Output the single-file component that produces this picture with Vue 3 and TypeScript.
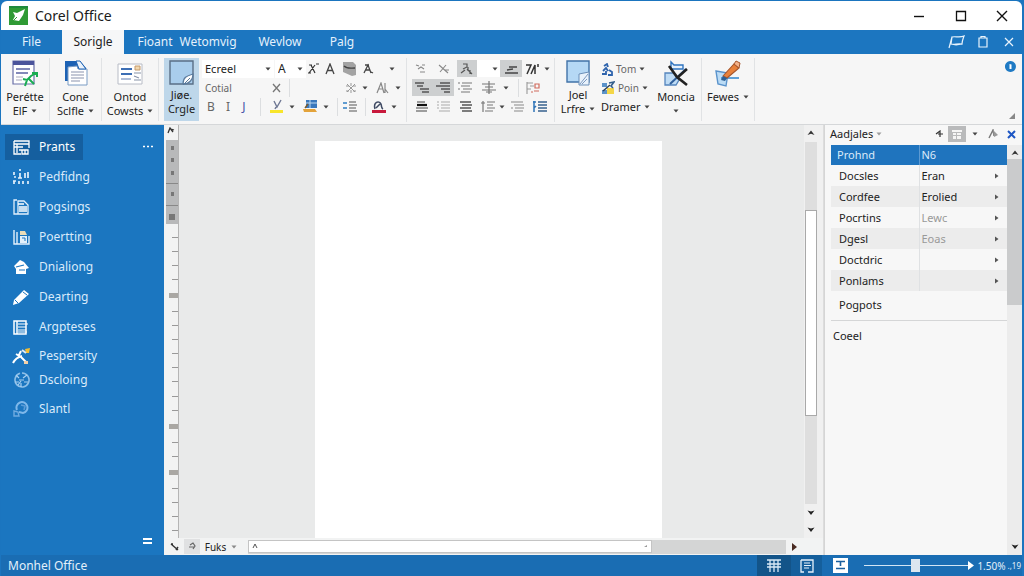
<script setup lang="ts">
import { h, ref } from 'vue'

type Shape = [d: string, fill: string, stroke?: string, width?: number]
type Icon = { w: number; h: number; s: Shape[] }

const K = '#333'
const G = '#888'

const icons: Record<string, Icon> = {
  logo: { w: 19, h: 19, s: [['M0 0H19V19H0Z', '#2f9a34'], ['M0 0H19V2H0Z', '#1f8a3c'], ['M4 6L8 7L16 3L14 9L10 15L4 14L6 10Z', '#fff'], ['M4 15L8 11', 'none', '#2f9a34', 1]] },
  min: { w: 12, h: 12, s: [['M1 6.5H11', 'none', '#111', 1.4]] },
  max: { w: 12, h: 12, s: [['M1.5 1.5H10.5V10.5H1.5Z', 'none', '#111', 1.3]] },
  close: { w: 12, h: 12, s: [['M1 1L11 11M11 1L1 11', 'none', '#111', 1.4]] },
  flag: { w: 18, h: 14, s: [['M4 2C7 1 12 3 16 1C15 4 14 6 14 9C10 8 6 10 3 9ZM4 2L1 13M3 9C6 10 10 10 14 9', 'none', '#e8f3fc', 1.2]] },
  clip: { w: 12, h: 14, s: [['M2 3H10V12H2ZM4 3V1.5H8V3', 'none', '#e8f3fc', 1.2]] },
  closeW: { w: 10, h: 10, s: [['M1 1L9 9M9 1L1 9', 'none', '#e8f3fc', 1.2]] },
  caret: { w: 6, h: 4, s: [['M0.5 0.5H5.5L3 3.5Z', '#444']] },
  info: { w: 11, h: 11, s: [['M5.5 0A5.5 5.5 0 1 1 5.4 0Z', '#1f7ac4'], ['M4.5 3L6.5 3.5V8H4.5Z', '#fff']] },
  collapse: { w: 7, h: 6, s: [['M0 6L6 0V6Z', '#888']] },

  report: { w: 26, h: 28, s: [['M1 1H22V24H1Z', '#fff', '#6a70a8', 1.2], ['M1 1H22V5H1Z', '#4b549b'], ['M4 9H18M4 13H16', 'none', '#5b63a3', 1.6], ['M4 17H11M4 20H10', 'none', '#aab', 1.2], ['M11 19L15 20L19 16L24 13M15 20L13 26M17 19L22 24M20 13H25V17', 'none', '#19ad52', 2]] },
  doc: { w: 24, h: 26, s: [['M1 1H16L22 8V21H1Z', '#1d62b4'], ['M4 7L13 6L14 9H23V25H4Z', '#fff', '#7b9cc4', 1], ['M12 1H16L22 9H15Z', '#eaf2fb', '#1d62b4', 1], ['M7 12H20M7 15H20M7 18H20M7 21H16', 'none', '#8a93ad', 1]] },
  letter: { w: 26, h: 24, s: [['M1 2H25V22H1Z', '#fff', '#b8bcc6', 1], ['M4 7H15M4 12H15', 'none', '#3d6fb5', 1.8], ['M4 17H14', 'none', '#8fa3c8', 1.4], ['M18 4H23V8H18Z', '#f1d7ad', '#c49a6d', 1], ['M17 11H24M17 14L22 16M17 18H24', 'none', '#8893a8', 1.1]] },
  sticky: { w: 25, h: 26, s: [['M1 1H24V24H1Z', '#a9cdec', '#5a6f86', 1.4], ['M14 24C14 17 18 16 24 14C24 20 20 24 14 24Z', '#fff', '#5a7a9c', 1.2], ['M14 25L21 18', 'none', '#5a7a9c', 1]] },
  note: { w: 24, h: 26, s: [['M1 1H23V22H1Z', '#b5d8f5', '#4273a8', 1.4], ['M13 25V14L23 12V25Z', '#e9f2fb', '#6b8fb8', 1], ['M14 24L22 14M16 24L21 19', 'none', '#7d9ac0', 1]] },
  tools: { w: 26, h: 28, s: [['M2 13H11L16 20L13 25H2Z', '#bfdcf5', '#5585bd', 1.3], ['M8 9V2L11 5H20V9Z', '#e6f1fb', '#2f74c0', 1.4], ['M23 9L7 24', 'none', '#2f5f9c', 2], ['M6 6L14 17L24 25', 'none', '#222', 2.6], ['M24 9L14 18', 'none', '#222', 2.4]] },
  brush: { w: 28, h: 28, s: [['M2 11L14 13L12 26L4 24Z', '#bcdcf5', '#5a93cc', 1.4], ['M7 18H25', 'none', '#3b8bd0', 1.6], ['M9 16L20 4L25 8L13 18Z', '#e8813b', '#a6552b', 1.1], ['M20 4L22 1L26 3L25 8Z', '#f4b28a', '#a6552b', 1], ['M9 16L13 18L11 21L7 20Z', '#2d5f94']] },

  xsup: { w: 12, h: 12, s: [['M1 10H4M8 10L4 2M2 2H5M2 10L8 2M9 1H12', 'none', K, 1.2]] },
  bigA: { w: 10, h: 12, s: [['M1 11L5 1L9 11M2.5 7.5H7.5', 'none', '#444', 1.3]] },
  clear: { w: 15, h: 15, s: [['M1 1L11 1L14 4V14L10 15L1 11Z', '#a3a3a3'], ['M2 5C5 8 8 7 13 7', 'none', '#444', 1.4]] },
  fancyA: { w: 11, h: 12, s: [['M1 10L5 2L8 10M3 7H7M2 2H6M8 9L10 10', 'none', '#444', 1.3]] },
  cross: { w: 9, h: 10, s: [['M1 1L8 9M8 1L1 9', 'none', '#777', 1.3]] },
  web: { w: 12, h: 12, s: [['M2 2L10 10M10 2L2 10M1 4H4M8 4H11M1 9H4M8 9H11M6 1V4M6 8V11', 'none', '#999', 1]] },
  aSlash: { w: 13, h: 12, s: [['M1 11L5 1L8 11M2 7H7M9 1V11M9 7L12 11', 'none', G, 1.2]] },
  hilite: { w: 15, h: 15, s: [['M5 2L8 8L12 1M7 8L6 10', 'none', '#6e7793', 1.4], ['M1 11H14V14H1Z', '#f8e52b']] },
  paint: { w: 17, h: 15, s: [['M4 1H15V9H4Z', '#3a78bd'], ['M4 4H15M8 1V9', 'none', '#bcd8f0', 1], ['M1 10H13L15 13H2Z', '#e3a33b'], ['M3 9L6 5', 'none', '#7b5a2b', 1.4]] },
  list: { w: 16, h: 13, s: [['M1 3H5M1 8H5', 'none', '#2f7fc4', 1.6], ['M7 2H14M7 5H15M7 8H14M7 11H15', 'none', '#555', 1.2]] },
  fontColor: { w: 14, h: 14, s: [['M3 9C1 2 7 0 9 4C10 7 9 8 11 9M4 8L8 4', 'none', '#3f4a63', 1.5], ['M0 10H14V13H0Z', '#c8193c']] },

  outA: { w: 12, h: 12, s: [['M1 2L4 3M7 2H10M3 6L6 4L9 6M5 9H10', 'none', G, 1.1]] },
  outB: { w: 12, h: 12, s: [['M1 2L10 10M8 2L2 9M7 7H11', 'none', G, 1.1]] },
  sort: { w: 14, h: 13, s: [['M3 2H7V5L3 7M1 11L5 8M7 7L12 12M8 5V9M10 8V12', 'none', '#555', 1.2]] },
  rule: { w: 15, h: 12, s: [['M5 4H13M1 10H14M3 7L9 6', 'none', '#444', 1.4]] },
  zed: { w: 15, h: 12, s: [['M1 2H6L2 11M6 11L10 2V11M13 1V4', 'none', '#333', 1.5]] },
  alignA: { w: 17, h: 13, s: [['M1 2H10M3 5H9M6 8H15M8 11H15', 'none', '#555', 1.5]] },
  alignB: { w: 17, h: 13, s: [['M5 2H15M1 5H15M6 8H15M9 11H15', 'none', '#555', 1.4]] },
  alignC: { w: 16, h: 13, s: [['M1 2H3M5 2H15M4 5H13M1 8H3M6 8H15M4 11H13', 'none', '#777', 1.2]] },
  alignD: { w: 16, h: 13, s: [['M1 3H14M4 6H12M1 9H15M5 11H11M8 0V13', 'none', '#777', 1.2]] },
  table: { w: 16, h: 14, s: [['M2 1V13M2 2H8M5 5H9M2 8H6', 'none', '#999', 1.1], ['M10 3H14V7H10ZM9 10H14M6 11H8', 'none', '#cf6a5c', 1.2]] },
  justA: { w: 14, h: 13, s: [['M2 2H10M1 8H13M1 11H12', 'none', '#444', 1.2], ['M2 5H12', 'none', '#111', 2.2]] },
  justB: { w: 15, h: 13, s: [['M1 2H3M5 2H14M1 5H3M5 5H14M1 8H3M5 8H14M3 11H14', 'none', '#aaa', 1.1]] },
  justC: { w: 14, h: 13, s: [['M1 2H12M3 5H13M1 8H12M3 11H13', 'none', '#555', 1.3]] },
  justD: { w: 15, h: 13, s: [['M2 1V12M0 3H4M6 2H14M6 5H12M6 8H14M4 11H12', 'none', '#777', 1.2]] },
  justE: { w: 15, h: 13, s: [['M1 2H13M4 5H14M1 8H3M5 8H14M4 11H13', 'none', '#888', 1.2]] },
  justF: { w: 16, h: 13, s: [['M2 1V12M1 2H4M4 6L2 8', 'none', '#2f74b8', 1.5], ['M6 2H15M6 5H15M6 8H15M6 11H15', 'none', '#37618f', 1.4]] },

  form: { w: 12, h: 13, s: [['M3 3L6 1L7 4M2 8L5 5L7 8M1 11H5V8M8 7L11 9V12H7', 'none', '#2f64ad', 1.8]] },
  pix: { w: 14, h: 14, s: [['M1 2H6V6H1Z', '#5c93c9'], ['M1 9H7V13H1Z', '#5c93c9'], ['M6 7H13V13H6Z', '#f4d648'], ['M8 2L13 1L10 5L12 7', 'none', '#355f8c', 1.6], ['M2 10L9 4', 'none', '#2c3e55', 1.4]] },

  grid: { w: 17, h: 15, s: [['M1 1H16V8M1 1V14H8M1 4H16M1 7H10M4 4V13M6 10H15V14H9V10M12 10V14', 'none', '#fff', 1.3]] },
  people: { w: 17, h: 16, s: [['M1 3V6M7 0V2M7 4V9M5 9H9M1 8H3M12 4V9M15 3V9M1 12V15M6 12V15M10 12V15M15 12V15M0 12H3', 'none', '#e3f0fb', 1.7]] },
  pages: { w: 17, h: 17, s: [['M4 1H1V15H5M5 2H11L15 6V15H5Z', 'none', '#e3f0fb', 1.3], ['M5 5H11M6 8H14M6 10H14M6 12H14', 'none', '#fff', 1.3]] },
  chart: { w: 17, h: 17, s: [['M1 1V15H16V7M4 15V3', 'none', '#e3f0fb', 1.4], ['M7 2H12L14 6H7Z', '#eadcb8'], ['M7 7H14V14H7Z', '#e3f0fb'], ['M9 9H12V12', 'none', '#1b75bf', 1]] },
  home: { w: 17, h: 16, s: [['M1 7L7 1L11 3L16 9L13 10V15H3V10Z', '#fff'], ['M3 8L11 6M6 11H12', 'none', '#1b75bf', 1.2]] },
  pencil: { w: 18, h: 17, s: [['M1 16L2 11L12 1L17 5L7 14Z', '#fff'], ['M11 3L15 6M3 11L6 14', 'none', '#1b75bf', 1]] },
  lines: { w: 16, h: 16, s: [['M1 2H13V15H1ZM4 2V15', 'none', '#fff', 1.5], ['M5 5H15M5 8H13M5 11H13M5 13H14', 'none', '#fff', 1.2]] },
  runner: { w: 18, h: 17, s: [['M1 15C3 11 6 9 10 8M4 6L9 9L14 14M9 3L7 7', 'none', '#fff', 2], ['M13 1L18 0L17 5L14 5Z', '#f0bd35'], ['M10 2L14 5', 'none', '#dce9f5', 2], ['M12 13H16V16H12Z', '#f2cfa8']] },
  gear: { w: 17, h: 17, s: [['M9 1A7 7 0 1 1 7 1.3', 'none', '#8fc0e8', 1.6], ['M3 3L6 6M14 3L10 6M2 10H6M15 10H11M8 15V11M6 8H11M5 13L8 9', 'none', '#a9d0f0', 1.2]] },
  bubble: { w: 17, h: 17, s: [['M4 9A5.5 5.5 0 1 1 10 12L6 11', 'none', '#7fb8ea', 2], ['M1 10L5 11L6 15H1Z', 'none', '#6fabe0', 1.4], ['M8 4L12 5L11 9', 'none', '#5a9cd8', 1.6]] },
  equals: { w: 9, h: 8, s: [['M0 1H9V3H0ZM0 5H9V7H0Z', '#fff']] },
  dots: { w: 10, h: 3, s: [['M0 1.5H2M4 1.5H6M8 1.5H10', 'none', '#fff', 1.5]] },

  up: { w: 8, h: 6, s: [['M0.5 5L4 0.5L7.5 5L4 3.8Z', '#333']] },
  down: { w: 8, h: 6, s: [['M0.5 0.5L4 5L7.5 0.5L4 1.5Z', '#222']] },
  right: { w: 6, h: 8, s: [['M1 0L6 4L1 8Z', '#4a2b22']] },
  tip: { w: 4, h: 6, s: [['M0 0.5L3.5 3L0 5.5Z', '#555']] },
  corner: { w: 9, h: 8, s: [['M1 1L8 7M1 1L3 1M6 7L8 4', 'none', '#333', 1.4]] },
  cap: { w: 8, h: 7, s: [['M1 6L3 1L6 5M4 2L7 3', 'none', '#333', 1.3]] },
  ring: { w: 8, h: 9, s: [['M2 3L5 1L7 4L5 7M1 5H6', 'none', '#666', 1.2]] },
  hat: { w: 6, h: 6, s: [['M1 5L3 1L5 5', 'none', '#555', 1]] },
  dash: { w: 4, h: 4, s: [['M0 3L3 1V3Z', '#999']] },
  arrowN: { w: 8, h: 8, s: [['M1 4L5 1V7M3 4H8', 'none', '#333', 1.2]] },
  tile: { w: 10, h: 10, s: [['M0 1H10V3H0ZM1 4H4V6H1ZM5 4H9V6H5ZM1 7H4V10H1ZM5 7H9V10H5Z', '#f5f5f5']] },
  nib: { w: 10, h: 10, s: [['M1 9L5 1L6 7', 'none', '#777', 1.4], ['M5 1L10 6L6 8Z', '#999']] },
  closeB: { w: 9, h: 9, s: [['M1 1L8 8M8 1L1 8', 'none', '#1d56c4', 2]] },

  viewA: { w: 14, h: 13, s: [['M0 1H14M0 5H14M0 8H14M3 1V13M7 1V13M11 1V13', 'none', '#d9e9f6', 1.3]] },
  viewB: { w: 14, h: 14, s: [['M1 1H13V13H8M1 1V13H4', 'none', '#e6f1fa', 1.3], ['M4 4H10M4 6.5H11M4 9H9', 'none', '#e6f1fa', 1.2]] },
  viewC: { w: 15, h: 15, s: [['M0 0H15V15H0Z', '#fff'], ['M3 3.5H12M3 10.5H12M7.5 4V8', 'none', '#1a5f9e', 1.6]] },
  arrowEnd: { w: 6, h: 9, s: [['M0 0L6 4.5L0 9Z', '#fff']] },
}

const Glyph = (props: { name: string }) => {
  const i = icons[props.name]
  return h(
    'svg',
    { width: i.w, height: i.h, viewBox: `0 0 ${i.w} ${i.h}`, 'aria-hidden': 'true' },
    i.s.map(([d, fill, stroke, width]) => h('path', { d, fill, stroke: stroke ?? 'none', 'stroke-width': width ?? 1 })),
  )
}
Glyph.props = ['name']

const tabs = ['File', 'Sorigle', 'Fioant', 'Wetomvig', 'Wevlow', 'Palg']

type Tool = { w: number; icon?: string; text?: string; on?: boolean; sep?: boolean; label?: string; cls?: string }
const fontRow1: Tool[] = [
  { w: 14, icon: 'xsup', label: 'Superscript' }, { w: 20, icon: 'bigA', label: 'Grow font' }, { w: 18, icon: 'clear', label: 'Clear' },
  { w: 20, icon: 'fancyA', label: 'Effects' }, { w: 28, icon: 'caret', label: 'More effects' },
]
const fontRow2: Tool[] = [
  { w: 66, text: 'Cotial', cls: 'sub' }, { w: 16, icon: 'cross', label: 'Remove' }, { w: 10, sep: true }, { w: 48 },
  { w: 18, icon: 'web', label: 'Web' }, { w: 10, icon: 'caret', label: 'Web options' }, { w: 24, icon: 'aSlash', label: 'Case' }, { w: 8, icon: 'caret', label: 'Case options' },
]
const fontRow3: Tool[] = [
  { w: 18, text: 'B', cls: 'letter' }, { w: 16, text: 'I', cls: 'letter' }, { w: 16, text: 'J', cls: 'letter under' }, { w: 16, sep: true },
  { w: 16, icon: 'hilite', label: 'Highlight' }, { w: 16, icon: 'caret', label: 'Highlight colours' }, { w: 20, icon: 'paint', label: 'Fill' }, { w: 12, icon: 'caret', label: 'Fill colours' },
  { w: 10, sep: true }, { w: 16, icon: 'list', label: 'List' }, { w: 14, sep: true }, { w: 14, icon: 'fontColor', label: 'Font colour' }, { w: 16, icon: 'caret', label: 'Font colours' },
]
const paraRows: Tool[][] = [
  [
    { w: 18, icon: 'outA', label: 'Outline' }, { w: 27, icon: 'outB', label: 'Remove outline' }, { w: 20, icon: 'sort', on: true, label: 'Sort' },
    { w: 23, icon: 'caret', cls: 'white', label: 'Sort order' }, { w: 22, icon: 'rule', on: true, label: 'Rule' }, { w: 20, icon: 'zed', label: 'Marks' }, { w: 10, icon: 'caret', label: 'Mark options' },
  ],
  [
    { w: 20, icon: 'alignA', on: true, label: 'Indent' }, { w: 22, icon: 'alignB', on: true, label: 'Outdent' }, { w: 22, icon: 'alignC', label: 'Bullets' },
    { w: 26, icon: 'alignD', label: 'Centre' }, { w: 8, icon: 'caret', label: 'Centre options' }, { w: 16, sep: true }, { w: 14, icon: 'table', label: 'Table' },
  ],
  [
    { w: 20, icon: 'justA', label: 'Left' }, { w: 22, icon: 'justB', label: 'Middle' }, { w: 24, icon: 'justC', label: 'Right' }, { w: 20, icon: 'justD', label: 'Numbering' },
    { w: 8, icon: 'caret', label: 'Numbering options' }, { w: 22, icon: 'justE', label: 'Spacing' }, { w: 24, icon: 'justF', label: 'Line height' },
  ],
]

const nav = [
  [
    { icon: 'grid', text: 'Prants' }, { icon: 'people', text: 'Pedfidng' }, { icon: 'pages', text: 'Pogsings' }, { icon: 'chart', text: 'Poertting' },
    { icon: 'home', text: 'Dnialiong' }, { icon: 'pencil', text: 'Dearting' }, { icon: 'lines', text: 'Argpteses' },
  ],
  [{ icon: 'runner', text: 'Pespersity' }, { icon: 'gear', text: 'Dscloing' }],
  [{ icon: 'bubble', text: 'Slantl' }],
]

const rows = [
  { name: 'Docsles', value: 'Eran' }, { name: 'Cordfee', value: 'Erolied' }, { name: 'Pocrtins', value: 'Lewc', dim: true },
  { name: 'Dgesl', value: 'Eoas', dim: true }, { name: 'Doctdric', value: '' }, { name: 'Ponlams', value: '' },
]

const blocks = [4, 13, 16]
const ticks = Array.from({ length: 21 }, (_, i) => blocks.includes(i))
const zoom = ref(49)
</script>

<template>
  <div class="app">
    <header class="title">
      <Glyph name="logo" />
      <h1>Corel Office</h1>
      <div class="win">
        <button aria-label="Minimise"><Glyph name="min" /></button>
        <button aria-label="Maximise"><Glyph name="max" /></button>
        <button aria-label="Close"><Glyph name="close" /></button>
      </div>
    </header>

    <nav class="tabs">
      <button v-for="(t, i) in tabs" :key="t" :class="['tab', 'tab' + i, { active: i === 1 }]">{{ t }}</button>
      <div class="tabtools">
        <button aria-label="Flag"><Glyph name="flag" /></button>
        <button aria-label="Clipboard"><Glyph name="clip" /></button>
        <button aria-label="Close document"><Glyph name="closeW" /></button>
      </div>
    </nav>

    <section class="ribbon">
      <button class="big b1"><Glyph name="report" /><span>Perétte</span><span>ElF <Glyph name="caret" /></span></button>
      <button class="big b2"><Glyph name="doc" /><span>Cone</span><span>Sclfle <Glyph name="caret" /></span></button>
      <button class="big b3"><Glyph name="letter" /><span>Ontod</span><span>Cowsts <Glyph name="caret" /></span></button>
      <button class="big b4"><Glyph name="sticky" /><span>Jiøe.</span><span>Crgle</span></button>

      <div class="rows font">
        <div class="row">
          <label class="combo wide"><select aria-label="Font"><option>Ecreel</option></select><Glyph name="caret" /></label>
          <label class="combo size"><select aria-label="Size"><option>A</option></select><Glyph name="caret" /></label>
          <button v-for="t in fontRow1" :key="t.label" class="tool" :style="{ width: t.w + 'px' }" :aria-label="t.label"><Glyph :name="t.icon!" /></button>
        </div>
        <div v-for="(r, ri) in [fontRow2, fontRow3]" :key="ri" class="row">
          <template v-for="(t, i) in r" :key="i">
            <button v-if="t.icon || t.text" :class="['tool', t.cls]" :style="{ width: t.w + 'px' }" :aria-label="t.label">
              <Glyph v-if="t.icon" :name="t.icon" /><template v-else>{{ t.text }}</template>
            </button>
            <span v-else :class="['gap', { sep: t.sep }]" :style="{ width: t.w + 'px' }"></span>
          </template>
        </div>
      </div>

      <div class="rows para">
        <div v-for="(r, ri) in paraRows" :key="ri" class="row">
          <template v-for="(t, i) in r" :key="i">
            <button v-if="t.icon" :class="['tool', t.cls, { on: t.on }]" :style="{ width: t.w + 'px' }" :aria-label="t.label"><Glyph :name="t.icon" /></button>
            <span v-else :class="['gap', { sep: t.sep }]" :style="{ width: t.w + 'px' }"></span>
          </template>
        </div>
      </div>

      <button class="big b5"><Glyph name="note" /><span>Joel</span><span>Lrfre <Glyph name="caret" /></span></button>
      <div class="rows draw">
        <button class="row link"><Glyph name="form" />Tom <Glyph name="caret" /></button>
        <button class="row link"><Glyph name="pix" />Poin <Glyph name="caret" /></button>
        <button class="row link dark">Dramer <Glyph name="caret" /></button>
      </div>
      <button class="big b6"><Glyph name="tools" /><span>Moncia</span><span><Glyph name="caret" /></span></button>
      <button class="big b7"><Glyph name="brush" /><span>Fewes <Glyph name="caret" /></span></button>
      <div class="ends">
        <button aria-label="Information"><Glyph name="info" /></button>
        <button aria-label="Collapse ribbon"><Glyph name="collapse" /></button>
      </div>
    </section>

    <div class="body">
      <aside class="side">
        <div class="lists">
          <ul v-for="(g, gi) in nav" :key="gi" :class="{ tight: gi === 1 }">
            <li v-for="(n, i) in g" :key="n.text">
              <button :class="{ current: gi === 0 && i === 0 }"><span class="ico"><Glyph :name="n.icon" /></span>{{ n.text }}</button>
            </li>
          </ul>
        </div>
        <div class="sidetools">
          <button aria-label="More"><Glyph name="dots" /></button>
          <button aria-label="Options"><Glyph name="equals" /></button>
        </div>
      </aside>

      <main class="work">
        <div class="ruler">
          <Glyph name="cap" />
          <div class="head"><i></i><i></i><i></i><i class="line"></i><i></i><i class="line"></i><i class="stop"></i></div>
          <div class="ticks"><i v-for="(b, i) in ticks" :key="i" :class="{ block: b }"></i></div>
        </div>
        <div class="canvas"><article class="page"></article></div>
        <div class="vbar">
          <Glyph name="up" />
          <div class="track"><div class="thumb"></div></div>
          <Glyph name="down" /><Glyph name="down" />
        </div>
        <div class="foot">
          <button class="f1" aria-label="Corner"><Glyph name="corner" /></button>
          <button class="f2" aria-label="Navigate"><Glyph name="ring" /></button>
          <button class="f3">Fuks <Glyph name="caret" /></button>
          <div class="htrack"><div class="hthumb"><Glyph name="hat" /><Glyph name="dash" /></div></div>
          <button class="f4" aria-label="Scroll right"><Glyph name="right" /></button>
        </div>
      </main>

      <aside class="panel">
        <header>
          <button class="ptitle">Aadjales <Glyph name="caret" /></button>
          <button aria-label="Back"><Glyph name="arrowN" /></button>
          <button class="tilebtn" aria-label="View"><Glyph name="tile" /></button>
          <button aria-label="View options"><Glyph name="caret" /></button>
          <button aria-label="Edit"><Glyph name="nib" /></button>
          <button aria-label="Close panel"><Glyph name="closeB" /></button>
        </header>
        <div class="pbody">
          <div class="props">
            <table>
              <thead><tr><th>Prohnd</th><th>N6</th><th></th></tr></thead>
              <tbody>
                <tr v-for="r in rows" :key="r.name">
                  <td>{{ r.name }}</td><td :class="{ dim: r.dim }">{{ r.value }}</td><td><Glyph name="tip" /></td>
                </tr>
              </tbody>
            </table>
            <p class="more">Pogpots</p>
            <p class="desc">Coeel</p>
          </div>
          <div class="pbar"><Glyph name="up" /><div class="ptrack"><div class="pthumb"></div></div><Glyph name="down" /></div>
        </div>
      </aside>
    </div>

    <footer class="status">
      <span class="name">Monhel Office</span>
      <button class="v1" aria-label="Grid view"><Glyph name="viewA" /></button>
      <button class="v2" aria-label="Page view"><Glyph name="viewB" /></button>
      <button class="v3" aria-label="Text view"><Glyph name="viewC" /></button>
      <input v-model="zoom" type="range" min="0" max="100" aria-label="Zoom" />
      <Glyph name="arrowEnd" />
      <span class="pct">1.50%</span><small>.,19</small>
    </footer>
  </div>
</template>

<style>
body { background: #1a6fb5; }
</style>

<style scoped>
* { box-sizing: border-box; }
.app {
  height: 100vh; display: flex; flex-direction: column; padding: 1px 2px 0 1px;
  background: #1b75bf; font: 12px/14px "Noto Sans", "Open Sans", sans-serif; color: #222; overflow: hidden;
}
h1, p, ul { margin: 0; padding: 0; font-weight: 400; }
ul { list-style: none; }
svg { display: block; flex: none; }
button { display: flex; align-items: center; justify-content: center; border: 0; padding: 0; background: none; font: inherit; color: inherit; white-space: nowrap; }

.title { display: flex; align-items: center; flex: none; height: 29px; padding-left: 8px; gap: 7px; background: #fff; border-radius: 6px 6px 0 0; }
.title h1 { font-size: 14px; line-height: 20px; color: #1a1a1a; }
.win { display: flex; margin-left: auto; }
.win button { width: 42px; height: 28px; }
.win button:last-child { width: 40px; }

.tabs { display: flex; flex: none; height: 24px; background: #1c76c0; color: #e4f1fc; }
.tab { height: 24px; }
.tab0 { width: 61px; }
.tab1 { width: 62px; }
.tab2 { width: 62px; }
.tab3 { width: 44px; }
.tab4 { width: 100px; }
.tab5 { width: 24px; }
.active { background: #f6f7f8; color: #222; }
.tabtools { display: flex; margin-left: auto; }
.tabtools button { width: 26px; }

.ribbon { display: flex; flex: none; height: 71px; padding-top: 4px; background: #f6f6f6; border-bottom: 1px solid #d5d7d9; }
.big { flex-direction: column; justify-content: flex-start; height: 63px; padding-top: 2px; border-right: 1px solid #e1e3e5; font-size: 11px; line-height: 14px; }
.big span { display: flex; align-items: center; gap: 4px; min-height: 14px; }
.big > svg { margin-bottom: 2px; }
.b1 { width: 49px; }
.b2 { width: 52px; }
.b3 { width: 57px; }
.b3 > svg { margin: 2px 0 4px; }
.b2 > svg { margin-bottom: 4px; }
.b4 { width: 35px; margin: 0 3px 0 5px; background: #bed7ea; border: 0; }
.b5 { width: 46px; border: 0; }
.b6 { width: 51px; }
.b7 { width: 53px; }
.rows { display: flex; flex-direction: column; gap: 1px; height: 64px; padding-top: 2px; }
.row { display: flex; height: 18px; }
.font { width: 205px; border-right: 1px solid #e1e3e5; }
.para { width: 148px; padding-left: 5px; border-right: 1px solid #e1e3e5; }
.draw { width: 50px; }
.combo { position: relative; display: flex; align-items: center; width: 32px; margin-left: 1px; background: #fff; }
.combo.wide { width: 74px; margin-left: 0; }
.combo select { appearance: none; width: 100%; height: 18px; border: 0; padding: 0 0 0 3px; background: none; font: inherit; font-size: 11px; color: #222; }
.combo.size select { font-size: 12px; }
.combo svg { position: absolute; right: 3px; }
.tool { flex: none; height: 17px; color: #666; font-size: 11px; }
.tool.sub { justify-content: flex-start; padding-left: 3px; font-size: 10px; }
.tool.letter { font-size: 12px; }
.under { color: #4653a8; text-decoration: underline; }
.on { background: #cdcfd0; }
.white { background: #fff; justify-content: flex-end; padding-right: 2px; }
.gap { flex: none; display: flex; justify-content: center; }
.sep::before { content: ""; width: 1px; background: #dcdee0; }
.link { justify-content: flex-start; gap: 3px; font-size: 10px; color: #666; }
.link.dark { font-size: 11px; color: #222; }
.ends { display: flex; flex-direction: column; justify-content: space-between; align-items: flex-end; margin-left: auto; padding: 3px 6px 5px 0; }

.body { display: flex; flex: 1; min-height: 0; }
.side { display: flex; justify-content: space-between; flex: none; width: 163px; padding: 9px 0 10px 4px; background: #1b76c0; color: #d9eafa; }
.lists { display: flex; flex-direction: column; gap: 4px; }
.lists ul { display: flex; flex-direction: column; gap: 4px; }
.lists ul.tight { gap: 0; }
.lists button { height: 26px; padding: 0 8px 0 7px; gap: 9px; }
.lists .tight button { height: 24px; }
.ico { display: flex; justify-content: center; width: 18px; }
.current { background: #155f9f; color: #fff; }
.sidetools { display: flex; flex-direction: column; justify-content: space-between; align-items: flex-start; padding: 11px 11px 0 0; }

.work { flex: 1; display: grid; grid-template: 1fr 17px / 15px 1fr 20px; min-width: 0; background: #f2f3f3; }
.ruler { display: flex; flex-direction: column; align-items: center; padding-top: 2px; border-right: 1px solid #b5b5b5; }
.head { display: flex; flex-direction: column; align-items: center; justify-content: space-between; align-self: flex-end; width: 12px; height: 84px; margin-top: 6px; padding: 6px 0 4px; background: #b8b9ba; flex: none; }
.head i { width: 3px; height: 4px; background: #777; }
.head .line { width: 12px; height: 1px; background: #888; }
.head .stop { width: 6px; height: 6px; }
.ticks { flex: 1; display: flex; flex-direction: column; justify-content: space-between; align-items: flex-end; align-self: stretch; padding: 13px 0 7px; }
.ticks i { width: 6px; height: 1px; background: #999; }
.ticks .block { width: 9px; height: 5px; background: #aaa8a4; }
.canvas { display: flex; justify-content: center; padding: 16px 6px 0 0; background: #e9eaea; }
.page { width: 56%; background: #fff; }
.vbar { display: flex; flex-direction: column; align-items: center; gap: 11px; padding: 5px 6px 5px 1px; border-right: 1px solid #dcdcdc; background: #f0f0f0; }
.track { flex: 1; align-self: stretch; display: flex; flex-direction: column; margin-top: -5px; margin-bottom: -5px; padding-top: 68px; background: #dedede; }
.thumb { height: 70%; max-height: 207px; background: #fff; border: 1px solid #a9a9a9; }
.foot { grid-column: 1 / -1; display: flex; align-items: center; padding-right: 21px; border-right: 1px solid #dcdcdc; }
.foot button { height: 15px; }
.f1 { width: 20px; }
.f2 { width: 16px; background: #e0e1e2; }
.f3 { width: 42px; gap: 5px; margin-right: 6px; font-size: 10px; }
.f3 svg { opacity: .6; }
.f4 { width: 16px; }
.htrack { flex: 1; height: 14px; background: #d4d5d5; }
.hthumb { display: flex; align-items: center; justify-content: space-between; width: 75%; height: 13px; padding: 0 3px; background: #fff; border: 1px solid #c4c4c4; }

.panel { flex: none; display: flex; flex-direction: column; width: 198px; background: #f7f7f7; border-left: 1px solid #d5d5d5; }
.panel header { display: flex; align-items: center; height: 20px; padding: 0 2px 2px 5px; }
.panel header button { width: 18px; height: 16px; }
.panel header .ptitle { width: auto; margin-right: auto; gap: 3px; font-size: 11px; }
.ptitle svg { opacity: .5; }
.panel header .tilebtn { background: #b9babb; }
.pbody { flex: 1; display: flex; min-height: 0; }
.props { flex: 1; padding-left: 6px; font-size: 11px; }
table { width: 100%; border-collapse: collapse; table-layout: fixed; }
tr { height: 21px; }
thead tr { height: 20px; background: #1f74be; color: #dcebf9; }
th, td { padding: 0 0 0 8px; text-align: left; font-weight: 400; line-height: 14px; }
th:first-child { padding-left: 6px; }
th:nth-child(1) { width: 88px; }
th:nth-child(3) { width: 20px; }
th:nth-child(2), td:nth-child(2) { padding-left: 2px; border-left: 1px solid #dfe1e3; }
th:nth-child(2) { border-color: #5d9ad2; }
tbody tr:nth-child(even) { background: #ececec; }
.dim { color: #999; }
.more { height: 30px; padding: 7px 0 0 8px; border-bottom: 1px solid #d5d6d7; }
.desc { padding: 8px 0 0 2px; }
.pbar { display: flex; flex-direction: column; align-items: center; width: 15px; padding: 5px 0 5px; background: #ececec; }
.ptrack { flex: 1; align-self: stretch; padding-top: 3px; }
.pthumb { height: 38%; background: #cacbcc; }

.status { display: flex; align-items: center; flex: none; height: 21px; background: #1a6db3; color: #e4f0fa; }
.name { margin: 0 auto 0 7px; }
.status button { height: 21px; }
.v1 { width: 34px; background: #135489; }
.v2 { width: 31px; background: #155f9c; }
.v3 { width: 36px; }
.status input { appearance: none; width: 104px; height: 13px; margin: 0 0 0 6px; background: linear-gradient(#d3e5f4, #d3e5f4) center / 100% 1px no-repeat; }
.status input::-webkit-slider-thumb { appearance: none; width: 9px; height: 13px; background: #dce6ef; }
.pct { margin-left: 3px; font-size: 10px; }
.status small { margin: 0 1px 0 2px; font-size: 8px; }
</style>
